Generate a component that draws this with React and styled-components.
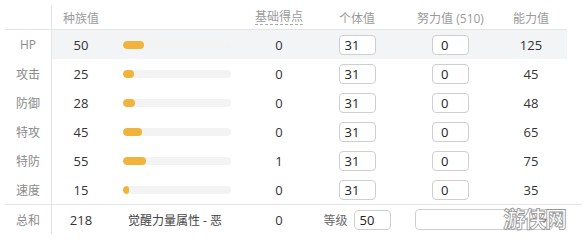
import React from 'react';
import styled, { createGlobalStyle } from 'styled-components';

const GlobalStyle = createGlobalStyle`
  html, body { margin: 0; padding: 0; background: #fff; }
  body { font-family: "Open Sans", "Noto Sans CJK SC", sans-serif; color: #333; }
`;

const COLS = '47px 58px 135px 68px 88px 99px 62px 5px';

const Page = styled.div`
  position: relative;
  width: 584px;
  height: 240px;
  overflow: hidden;
  box-sizing: border-box;
  padding: 5px 0 0 5px;
`;

const Row = styled.div`
  display: grid;
  grid-template-columns: ${COLS};
  height: ${(p) => p.$h}px;
  width: ${(p) => (p.$wide ? 577 : 562)}px;
  background: ${(p) => (p.$hl ? '#f3f4f6' : 'transparent')};
  border-bottom: ${(p) => (p.$lineBelow ? '1px solid #e4e4e4' : 'none')};
  border-top: ${(p) => (p.$lineAbove ? '1px solid #e4e4e4' : 'none')};
`;

const Cell = styled.div`
  display: flex;
  align-items: center;
  justify-content: ${(p) => p.$justify || 'center'};
  padding-left: ${(p) => p.$pl || 0}px;
  grid-column: ${(p) => p.$span || 'auto'};
  font-size: 13px;
  color: #333;
  gap: ${(p) => p.$gap || 0}px;
`;

const LabelCell = styled(Cell)`
  background: #fff;
  border-right: 1px solid #e4e4e4;
  font-size: 12px;
  color: #8a8a8a;
`;

const HeadCell = styled(Cell)`
  font-size: 12px;
  color: #9a9a9a;
  padding-top: 1px;
`;

const Dotted = styled.span`
  border-bottom: 1px dashed #aaa;
  line-height: 14px;
`;

const Track = styled.div`
  width: 108px;
  height: 8px;
  border-radius: 4px;
  background: #f3f3f4;
  overflow: hidden;
  display: flex;
`;

const Fill = styled.div`
  height: 8px;
  border-radius: 4px;
  background: #f0b33b;
  min-width: 6px;
`;

const Box = styled.input`
  box-sizing: border-box;
  width: 37px;
  height: 20px;
  border: 1px solid #cfcfcf;
  border-radius: 4px;
  background: #fff;
  font-family: "Open Sans", sans-serif;
  font-size: 13px;
  color: #222;
  padding: 0 0 0 ${(p) => p.$pl || 5}px;
  outline: none;
`;

const SmallLabel = styled.span`
  font-size: 12px;
  color: #666;
`;

const CJKText = styled.span`
  font-size: 12px;
  color: #444;
  margin-left: -5px;
`;

const Select = styled.div`
  box-sizing: border-box;
  width: 138px;
  height: 21px;
  margin-left: 14px;
  border: 1px solid #cfcfcf;
  border-radius: 4px;
  background: #fff;
  position: relative;
  &::after {
    content: '';
    position: absolute;
    right: 5px;
    top: 9px;
    border-left: 3px solid transparent;
    border-right: 3px solid transparent;
    border-top: 4px solid #222;
  }
`;

const Watermark = styled.div`
  position: absolute;
  left: 503px;
  top: 206px;
  line-height: 1;
  font-family: "Noto Sans CJK SC", sans-serif;
  font-size: 22px;
  font-weight: 700;
  letter-spacing: -1px;
  color: #fff;
  -webkit-text-stroke: 0.8px #8a8a8a;
  opacity: 0.9;
`;

const stats = [
  { name: 'HP', base: 50, pt: 0, iv: 31, ev: 0, val: 125, hl: true },
  { name: '攻击', base: 25, pt: 0, iv: 31, ev: 0, val: 45 },
  { name: '防御', base: 28, pt: 0, iv: 31, ev: 0, val: 48 },
  { name: '特攻', base: 45, pt: 0, iv: 31, ev: 0, val: 65 },
  { name: '特防', base: 55, pt: 1, iv: 31, ev: 0, val: 75 },
  { name: '速度', base: 15, pt: 0, iv: 31, ev: 0, val: 35 },
];

export default function App() {
  return (
    <>
      <GlobalStyle />
      <Page>
        <Row $h={24} $lineBelow>
          <LabelCell />
          <HeadCell>种族值</HeadCell>
          <HeadCell />
          <HeadCell><Dotted>基础得点</Dotted></HeadCell>
          <HeadCell>个体值</HeadCell>
          <HeadCell>努力值 (510)</HeadCell>
          <HeadCell>能力值</HeadCell>
          <HeadCell />
        </Row>
        {stats.map((s) => (
          <Row key={s.name} $h={29} $hl={s.hl}>
            <LabelCell>{s.name}</LabelCell>
            <Cell>{s.base}</Cell>
            <Cell $justify="flex-start" $pl={13}>
              <Track>
                <Fill style={{ width: `${Math.round((s.base / 255) * 108)}px` }} />
              </Track>
            </Cell>
            <Cell>{s.pt}</Cell>
            <Cell><Box readOnly value={s.iv} $pl={5} /></Cell>
            <Cell><Box readOnly value={s.ev} $pl={8} /></Cell>
            <Cell>{s.val}</Cell>
            <Cell />
          </Row>
        ))}
        <Row $h={29} $wide $lineAbove>
          <LabelCell>总和</LabelCell>
          <Cell>218</Cell>
          <Cell><CJKText>觉醒力量属性 - 恶</CJKText></Cell>
          <Cell>0</Cell>
          <Cell $gap={6}><SmallLabel>等级</SmallLabel><Box readOnly value={50} $pl={5} /></Cell>
          <Cell $span="6 / 9" $justify="flex-start"><Select /></Cell>
        </Row>
        <Watermark>游侠网</Watermark>
      </Page>
    </>
  );
}
